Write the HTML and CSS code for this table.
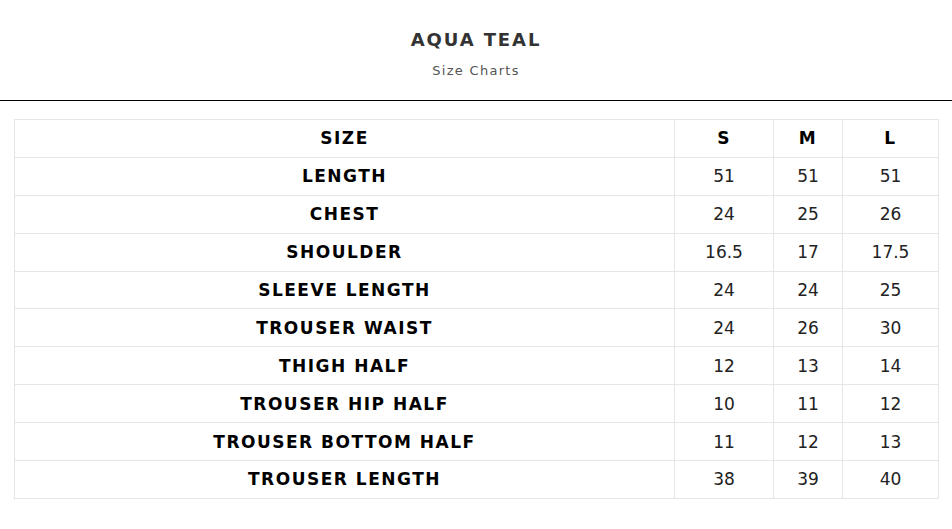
FILE: index.html
```html
<!DOCTYPE html>
<html>
<head>
<meta charset="utf-8">
<link rel="stylesheet" href="styles.css">
</head>
<body>
<header class="head">
  <h1 class="title">AQUA TEAL</h1>
  <p class="subtitle">Size Charts</p>
</header>
<main class="wrap">
  <table class="chart">
    <colgroup>
      <col class="c-name"><col class="c-s"><col class="c-m"><col class="c-l">
    </colgroup>
    <tbody>
      <tr class="hrow"><th>SIZE</th><th>S</th><th>M</th><th>L</th></tr>
      <tr><th>LENGTH</th><td>51</td><td>51</td><td>51</td></tr>
      <tr><th>CHEST</th><td>24</td><td>25</td><td>26</td></tr>
      <tr><th>SHOULDER</th><td>16.5</td><td>17</td><td>17.5</td></tr>
      <tr><th>SLEEVE LENGTH</th><td>24</td><td>24</td><td>25</td></tr>
      <tr><th>TROUSER WAIST</th><td>24</td><td>26</td><td>30</td></tr>
      <tr><th>THIGH HALF</th><td>12</td><td>13</td><td>14</td></tr>
      <tr><th>TROUSER HIP HALF</th><td>10</td><td>11</td><td>12</td></tr>
      <tr><th>TROUSER BOTTOM HALF</th><td>11</td><td>12</td><td>13</td></tr>
      <tr><th>TROUSER LENGTH</th><td>38</td><td>39</td><td>40</td></tr>
    </tbody>
  </table>
</main>
</body>
</html>
```
FILE: styles.css
```css
html, body {
  margin: 0;
  padding: 0;
  background: #fff;
}
body {
  font-family: "DejaVu Sans", "Open Sans", sans-serif;
  color: #000;
}
.head {
  text-align: center;
  padding-top: 28px;
  height: 72px;
  border-bottom: 1px solid #000;
}
.title {
  margin: 0;
  font-size: 18px;
  line-height: 24px;
  font-weight: 700;
  letter-spacing: 1.9px;
  color: #333;
}
.subtitle {
  margin: 11px 0 0;
  font-size: 13px;
  line-height: 16px;
  letter-spacing: 1.3px;
  color: #555;
}
.wrap {
  padding: 18px 14px 0;
}
.chart {
  width: 924px;
  border-collapse: collapse;
  table-layout: fixed;
}
.c-name { width: 660px; }
.c-s { width: 99px; }
.c-m { width: 69px; }
.c-l { width: 96px; }
.chart th, .chart td {
  border: 1px solid #e6e6e6;
  height: 36.9px;
  padding: 0;
  text-align: center;
  vertical-align: middle;
  font-size: 17px;
}
.chart th {
  font-weight: 700;
  letter-spacing: 1.5px;
  color: #000;
}
.chart td {
  font-weight: 400;
  color: #222;
}
```
